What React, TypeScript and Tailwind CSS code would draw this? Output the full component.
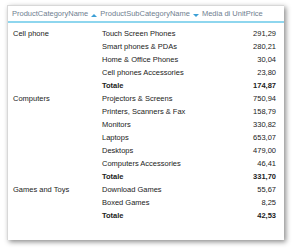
import React from "react";

const rows = [
  { cat: "Cell phone", sub: "Touch Screen Phones", val: "291,29" },
  { cat: "", sub: "Smart phones & PDAs", val: "280,21" },
  { cat: "", sub: "Home & Office Phones", val: "30,04" },
  { cat: "", sub: "Cell phones Accessories", val: "23,80" },
  { cat: "", sub: "Totale", val: "174,87", total: true },
  { cat: "Computers", sub: "Projectors & Screens", val: "750,94" },
  { cat: "", sub: "Printers, Scanners & Fax", val: "158,79" },
  { cat: "", sub: "Monitors", val: "330,82" },
  { cat: "", sub: "Laptops", val: "653,07" },
  { cat: "", sub: "Desktops", val: "479,00" },
  { cat: "", sub: "Computers Accessories", val: "46,41" },
  { cat: "", sub: "Totale", val: "331,70", total: true },
  { cat: "Games and Toys", sub: "Download Games", val: "55,67" },
  { cat: "", sub: "Boxed Games", val: "8,25" },
  { cat: "", sub: "Totale", val: "42,53", total: true },
];

function Arrow({ up }: { up?: boolean }) {
  return (
    <svg width="6" height="5" viewBox="0 0 6 5" className="mx-[3px] mt-[2px]">
      {up ? <path d="M0 4 L3 1 L6 4 Z" fill="#3b9fd6" /> : <path d="M0 1 L6 1 L3 4 Z" fill="#3b9fd6" />}
    </svg>
  );
}

export default function App() {
  return (
    <div className="w-[293px] h-[248px] bg-white pt-[5px] pl-[7px]" style={{ fontFamily: "'Liberation Sans', Arial, sans-serif" }}>
      <div className="w-[277px] h-[235px] bg-white border-t border-l border-[#d8d8d8] shadow-[2px_2px_5px_rgba(0,0,0,0.45)] text-[7.5px] text-[#222]">
        <div className="h-[17px] flex items-center pl-[4px] pt-[1px] text-[#6f8090] border-b-2 border-[#8ed6ee]">
          <span>ProductCategoryName</span>
          <Arrow up />
          <span>ProductSubCategoryName</span>
          <Arrow />
          <span>Media di UnitPrice</span>
        </div>
        <div className="pt-[4px]">
          {rows.map((r, i) => (
            <div key={i} className={`h-[13px] flex items-center ${r.total ? "font-bold" : ""}`}>
              <span className="w-[94px] pl-[5px]">{r.cat}</span>
              <span className="flex-1">{r.sub}</span>
              <span className="pr-[8px] text-right">{r.val}</span>
            </div>
          ))}
        </div>
      </div>
    </div>
  );
}
